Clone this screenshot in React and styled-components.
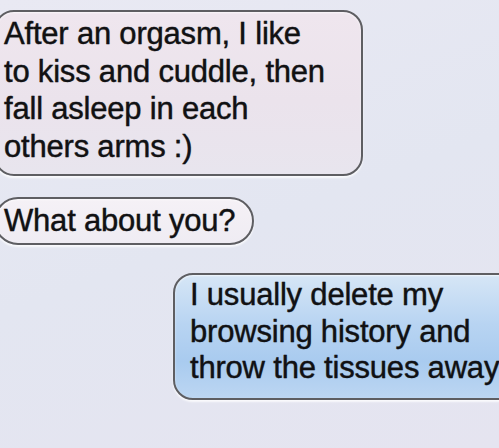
import styled, { createGlobalStyle } from "styled-components";

const Global = createGlobalStyle`
	html, body {
		margin: 0;
		padding: 0;
	}
	body {
		font-family: "Liberation Sans", Arial, sans-serif;
	}
`;

const Screen = styled.main`
	width: 499px;
	height: 448px;
	overflow: hidden;
	display: flex;
	flex-direction: column;
	background: linear-gradient(160deg, #e9e9f3 0%, #e3e6f1 50%, #e5e4f0 100%);
`;

const Bubble = styled.div`
	box-sizing: border-box;
	width: ${(p) => p.$width}px;
	height: ${(p) => p.$height}px;
	margin: ${(p) => p.$margin};
	padding: ${(p) => p.$padding};
	border: 2px solid #5e5e62;
	border-radius: ${(p) => p.$radius}px;
	background: ${(p) => p.$fill};
	box-shadow: 0 2px 2px rgba(255, 255, 255, 0.8), inset 0 1px 2px rgba(255, 255, 255, 0.7);
	color: #111113;
	font-size: 31px;
	line-height: ${(p) => p.$lineHeight || 37.5}px;
	letter-spacing: -0.2px;
	white-space: nowrap;
	-webkit-text-stroke: 0.3px #111113;
	text-shadow: 0 0 1px rgba(0, 0, 0, 0.35);
	flex-shrink: 0;
`;

const Line = styled.div``;

const received = "linear-gradient(180deg, #efe6ee 0%, #ebe3ec 55%, #e8e5ee 100%)";
const question = "linear-gradient(180deg, #f5f1f6 0%, #efecf3 100%)";
const sent = "linear-gradient(180deg, #d6e6f6 0%, #b8d4f2 40%, #a9cbef 70%, #bcd6f2 100%)";

const App = () => {
	return (
		<>
			<Global />
			<Screen>
				<Bubble
					$width={369}
					$height={166}
					$margin="10px 0 0 -6px"
					$padding="3px 0 0 8px"
					$radius={20}
					$fill={received}
				>
					<Line>After an orgasm, I like</Line>
					<Line>to kiss and cuddle, then</Line>
					<Line>fall asleep in each</Line>
					<Line>others arms :)</Line>
				</Bubble>
				<Bubble
					$width={260}
					$height={48}
					$margin="21px 0 0 -6px"
					$padding="3px 0 0 8px"
					$radius={24}
					$fill={question}
				>
					What about you?
				</Bubble>
				<Bubble
					$width={360}
					$height={127}
					$margin="28px 0 0 173px"
					$padding="2px 0 0 15px"
					$radius={20}
					$fill={sent}
					$lineHeight={36.5}
				>
					<Line>I usually delete my</Line>
					<Line>browsing history and</Line>
					<Line>throw the tissues away</Line>
				</Bubble>
			</Screen>
		</>
	);
};

export default App;
